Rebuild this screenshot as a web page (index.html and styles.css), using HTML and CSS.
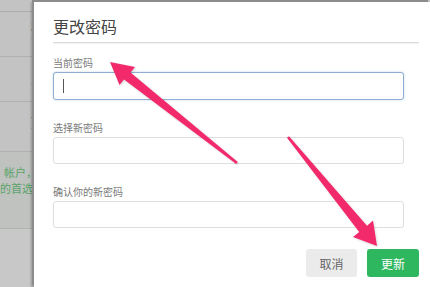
FILE: index.html
```html
<!DOCTYPE html>
<html lang="zh-CN">
<head>
<meta charset="utf-8">
<title>更改密码</title>
<link rel="stylesheet" href="styles.css">
</head>
<body>
<div class="page">
  <div class="topbar"></div>
  <div class="row"><span class="t-dark">3</span><span class="t-blue">设</span></div>
  <div class="row"><span class="t-dark">1</span><span class="t-blue">设</span></div>
  <div class="row row-tall"><span class="t-dark">手</span><span class="t-blue">设</span></div>
  <div class="notice">
    <p class="green g1">帐户，</p>
    <p class="green g2">的首选</p>
  </div>
  <div class="rest"></div>
</div>

<div class="modal">
  <div class="modal-head">
    <h2 class="title">更改密码</h2>
  </div>
  <div class="form">
    <div class="field">
      <label class="label">当前密码</label>
      <div class="input focused"><span class="caret"></span></div>
    </div>
    <div class="field">
      <label class="label">选择新密码</label>
      <div class="input"></div>
    </div>
    <div class="field">
      <label class="label">确认你的新密码</label>
      <div class="input"></div>
    </div>
  </div>
  <div class="actions">
    <button class="btn btn-cancel">取消</button>
    <button class="btn btn-ok">更新</button>
  </div>
</div>

<svg class="arrows" width="430" height="287" viewBox="0 0 430 287">
  <polygon points="110,62 135,67 130.5,72.5 237.8,162 236.2,164 124,79.5 119.5,85"/>
  <polygon points="377,246 353,237 359.2,232 287,137.8 289,136.2 367,225.8 373,220.5"/>
</svg>
</body>
</html>
```

FILE: styles.css
```css
* { box-sizing: border-box; }
html, body {
  margin: 0;
  padding: 0;
  width: 430px;
  height: 287px;
  overflow: hidden;
}
body {
  position: relative;
  background: #c3c3c3;
  font-family: "Noto Sans CJK SC", "Noto Sans", sans-serif;
}

/* dimmed page behind the modal */
.page {
  display: flex;
  flex-direction: column;
  width: 33px;
  height: 287px;
  overflow: hidden;
}
.topbar {
  flex: none;
  height: 12px;
  border-bottom: 1px solid #adadad;
}
.row {
  flex: none;
  height: 45px;
  border-bottom: 1px solid #b0b0b0;
  display: flex;
  flex-direction: column;
  padding: 7px 0 0 31px;
  font-size: 11px;
  line-height: 14px;
}
.row-tall { height: 50px; }
.t-dark { color: #4a4a4a; }
.t-blue { color: #6a86a6; }
.notice {
  flex: none;
  height: 77px;
  border-bottom: 1px solid #b3b3b3;
  background: #bfc2bf;
  padding-top: 12px;
}
.green {
  margin: 0;
  font-size: 11px;
  line-height: 16px;
  color: #5aa46a;
  white-space: nowrap;
}
.g1 { padding-left: 4px; }
.g2 { padding-left: 0; }
.rest { flex: 1; background: #c8c8c8; }

/* modal */
.modal {
  position: absolute;
  left: 34px;
  top: 2px;
  width: 396px;
  height: 285px;
  background: #fff;
  box-shadow: -2px -2px 0 #8c8c8c, -3px 0 2px rgba(0,0,0,0.25);
  padding: 13px 0 0 19px;
  display: flex;
  flex-direction: column;
}
.modal-head {
  width: 366px;
  border-bottom: 1px solid #dcdcdc;
  box-shadow: 0 1px 0 #f3f3f3;
  padding-bottom: 5px;
}
.title {
  margin: 0;
  font-size: 16px;
  line-height: 22px;
  font-weight: 400;
  color: #444;
}
.form {
  display: flex;
  flex-direction: column;
  gap: 21px;
  padding-top: 13px;
}
.field {
  display: flex;
  flex-direction: column;
  gap: 2px;
}
.label {
  font-size: 10px;
  line-height: 14px;
  color: #7a7a7a;
}
.input {
  width: 351px;
  height: 27px;
  border: 1px solid #dedede;
  border-radius: 3px;
  background: #fff;
  display: flex;
  align-items: center;
  padding-left: 9px;
}
.input.focused {
  height: 28px;
  border-color: #8eaed2;
  box-shadow: 0 0 2px rgba(120,160,210,0.5);
}
.caret {
  width: 1px;
  height: 14px;
  background: #555;
}
.actions {
  width: 366px;
  display: flex;
  justify-content: flex-end;
  gap: 10px;
  margin-top: 21px;
}
.btn {
  height: 28px;
  border: none;
  border-radius: 3px;
  font-family: "Noto Sans CJK SC", "Noto Sans", sans-serif;
  font-size: 12px;
  padding: 0;
}
.btn-cancel {
  width: 51px;
  background: #ebebeb;
  color: #666;
}
.btn-ok {
  width: 52px;
  background: #2fb75f;
  color: #fff;
}

/* annotation arrows */
.arrows {
  position: absolute;
  left: 0;
  top: 0;
  fill: #f22a6c;
  filter: drop-shadow(1px 1px 1px rgba(0,0,0,0.15));
}
```
